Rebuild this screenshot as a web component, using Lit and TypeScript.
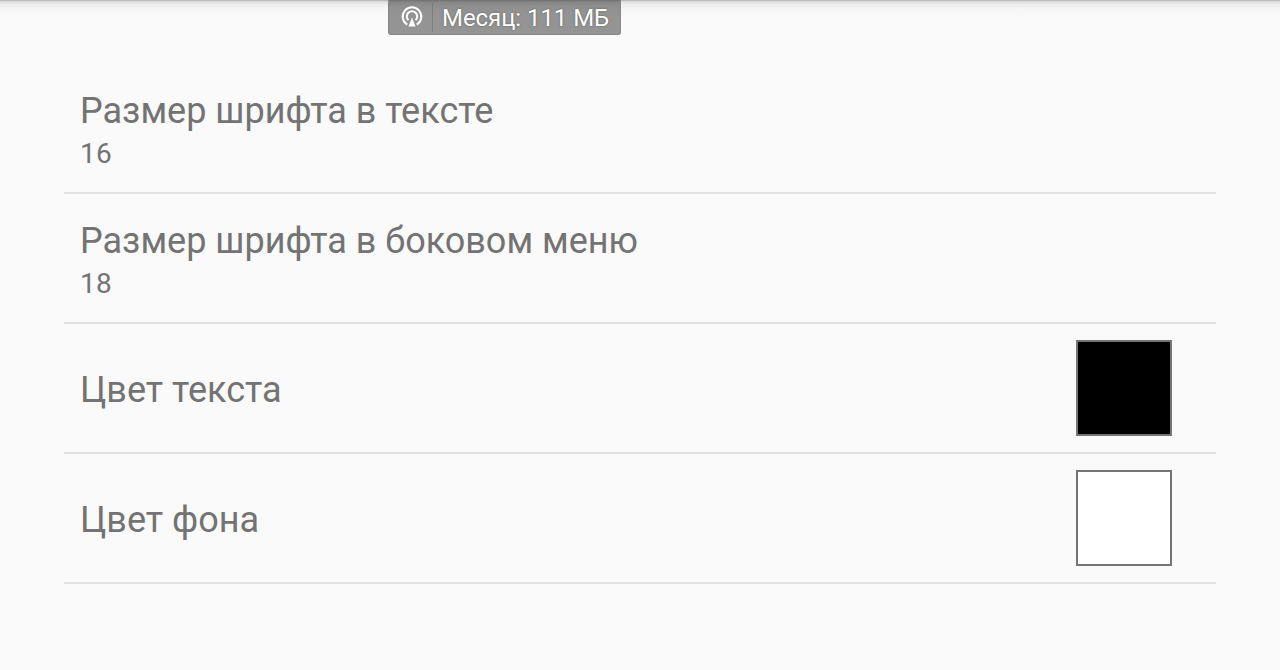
import { LitElement, html, css, svg } from "lit";
import { customElement } from "lit/decorators.js";

@customElement("traffic-badge")
export class TrafficBadge extends LitElement {
  static styles = css`
    :host {
      position: absolute;
      top: 0;
      left: 388px;
      display: flex;
      box-sizing: border-box;
      width: 233px;
      height: 35px;
      border-radius: 0 0 3px 3px;
      background: linear-gradient(#6f6f6f 0, #868686 2px, #8e8e8e 6px, #949494 14px);
      border: 1px solid #868686;
      border-top: none;
      color: #fff;
      font: 24px/36px Roboto, sans-serif;
    }

    .icon {
      display: flex;
      width: 44px;
      height: 32px;
      box-sizing: border-box;
      padding: 5px 0 0 12px;
      border-right: 1px solid #7d7d7d;
    }

    .label {
      padding-left: 9px;
      letter-spacing: -0.06px;
      white-space: nowrap;
      text-shadow: 0 0 2px #555;
    }
  `;

  render() {
    return html`
      <div class="icon">
        ${svg`<svg width="22" height="22" viewBox="0 0 22 22" fill="none" stroke="#fff" stroke-width="2">
          <path d="M6.2 19.6A9.3 9.3 0 1 1 15.8 19.6" />
          <path d="M7.4 15.1A5.2 5.2 0 1 1 14.6 15.1" />
          <path d="M11 12.5L7.5 21.5H14.5Z" fill="#fff" stroke="none" />
        </svg>`}
      </div>
      <div class="label">Месяц: 111 МБ</div>
    `;
  }
}

@customElement("app-root")
export class AppRoot extends LitElement {
  static styles = css`
    :host {
      display: block;
      position: relative;
      box-sizing: border-box;
      height: 670px;
      padding: 64px 64px 0;
      overflow: hidden;
      background: linear-gradient(#a8a8a8 0, #cfcfcf 1px, #e4e4e4 2px, #efefef 5px, #f6f6f6 10px, #fafafa 18px);
      color: #737373;
      font-family: Roboto, sans-serif;
    }

    .row {
      display: flex;
      align-items: center;
      justify-content: space-between;
      box-sizing: border-box;
      height: 130px;
      padding: 0 44px 0 16px;
      border-bottom: 2px solid #e0e0e0;
    }

    .text {
      padding-top: 4px;
    }

    .title {
      font-size: 36px;
      line-height: 48px;
    }

    .value {
      font-size: 28px;
      line-height: 38px;
      letter-spacing: 0.3px;
    }

    .swatch {
      box-sizing: border-box;
      width: 96px;
      height: 96px;
      border: 2px solid #757575;
    }

    .black {
      background: #000;
    }

    .white {
      background: #fff;
    }
  `;

  renderSize(title: string, value: number) {
    return html`
      <div class="row">
        <div class="text">
          <div class="title">${title}</div>
          <div class="value">${value}</div>
        </div>
      </div>
    `;
  }

  renderColor(title: string, color: string) {
    return html`
      <div class="row">
        <div class="text title">${title}</div>
        <div class="swatch ${color}"></div>
      </div>
    `;
  }

  render() {
    return html`
      <traffic-badge></traffic-badge>
      ${this.renderSize("Размер шрифта в тексте", 16)}
      ${this.renderSize("Размер шрифта в боковом меню", 18)}
      ${this.renderColor("Цвет текста", "black")}
      ${this.renderColor("Цвет фона", "white")}
    `;
  }
}
